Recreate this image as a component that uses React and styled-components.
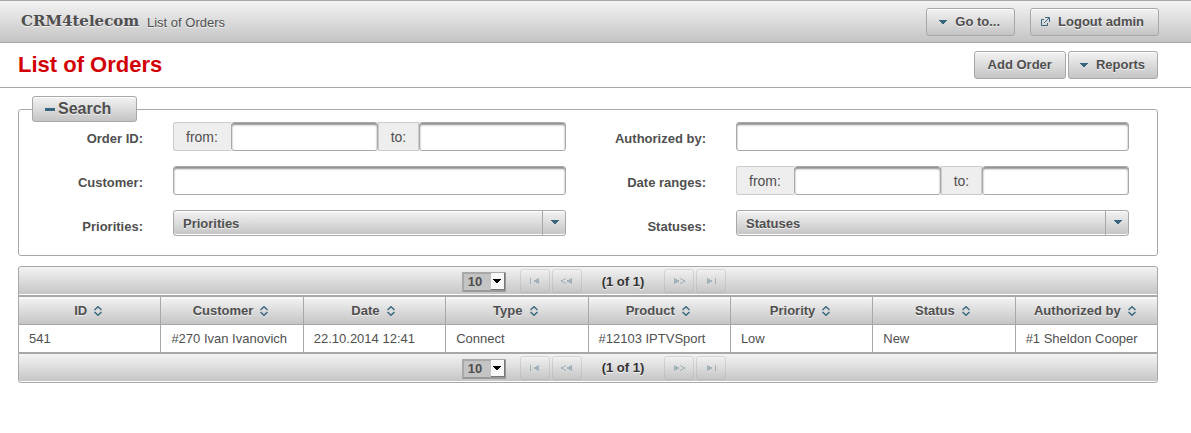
import React from "react";
import styled, { createGlobalStyle, css } from "styled-components";

const line = "#a8a8a8";
const ink = "#4f4f4f";
const accent = "#38667f";

const GlobalStyle = createGlobalStyle`
  *, *::before, *::after { box-sizing: border-box; }
  body {
    margin: 0;
    background: #fff;
    color: ${ink};
    font: 13px/18px "Liberation Sans", Arial, Helvetica, sans-serif;
  }
  button, input, select { font: inherit; color: inherit; }
`;

const raised = css`
  border: 1px solid ${line};
  background: #c4c4c4 linear-gradient(to bottom, rgba(255, 255, 255, 0.8), rgba(255, 255, 255, 0));
  color: ${ink};
  text-shadow: 0 1px 0 rgba(255, 255, 255, 0.7);
`;

const TopBar = styled.header`
  ${raised}
  border-width: 1px 0;
  display: flex;
  align-items: center;
  min-height: 43px;
  padding: 0 32px 0 21px;
`;

const Brand = styled.a`
  width: 126px;
  padding-bottom: 2px;
  color: ${ink};
  font: bold 15px/18px Georgia, "DejaVu Serif", serif;
  text-decoration: none;
`;

const Crumb = styled.span`
  flex: 1;
  padding-top: 2px;
`;

const Actions = styled.div`
  display: flex;
  gap: ${(p) => p.$gap};
`;

const Button = styled.button`
  ${raised}
  display: flex;
  align-items: center;
  gap: 6px;
  height: 28px;
  padding: ${(p) => p.$pad || "0 13px"};
  border-radius: 3px;
  box-shadow: inset 0 1px 0 #fff;
  font-weight: bold;
  cursor: pointer;
`;

const TitleBar = styled.div`
  display: flex;
  align-items: center;
  justify-content: space-between;
  min-height: 45px;
  padding: 0 33px 0 18px;
  border-bottom: 1px solid ${line};
`;

const Title = styled.h1`
  margin: 0;
  color: #d20005;
  font-size: 22px;
  line-height: 28px;
`;

const Main = styled.main`
  padding: 8px 33px 32px 18px;
`;

const SearchBox = styled.fieldset`
  min-width: 0;
  margin: 0;
  padding: 0 28px 19px 0;
  border: 1px solid ${line};
  border-radius: 3px;
`;

const Legend = styled.legend`
  margin-left: 13px;
  padding: 0;
`;

const LegendToggle = styled.button`
  ${raised}
  display: flex;
  align-items: center;
  gap: 3px;
  width: 105px;
  height: 26px;
  padding: 0 12px;
  border-radius: 3px;
  box-shadow: inset 0 1px 0 #fff;
  font-size: 16px;
  font-weight: bold;
`;

const Fields = styled.div`
  display: grid;
  grid-template-columns: 1fr 1fr;
  gap: 15px 16px;
`;

const FieldRow = styled.div`
  display: grid;
  grid-template-columns: 124px minmax(0, 1fr);
  column-gap: 30px;
  align-items: start;
`;

const Label = styled.label`
  padding-top: 8px;
  font-weight: bold;
  text-align: right;
`;

const TextBox = styled.input`
  display: block;
  flex: 1;
  width: 100%;
  min-width: 0;
  height: 29px;
  padding: 4px;
  border: 1px solid ${line};
  border-radius: 3px;
  background: #fff;
  box-shadow: inset 0 2px 2px #8f8f8f;
`;

const Range = styled.div`
  display: flex;
`;

const AddOn = styled.label`
  height: 29px;
  padding: ${(p) => (p.$first ? "4px 13px 4px 12px" : "4px 12px")};
  border: 1px solid #ccc;
  border-right-width: ${(p) => (p.$first ? "0" : "1px")};
  border-radius: ${(p) => (p.$first ? "3px 0 0 3px" : "0")};
  background: #eee;
  font-size: 14px;
  line-height: 20px;
`;

const PickerWrap = styled.div`
  display: grid;
  grid-template-columns: 1fr 24px;
`;

const PickerSelect = styled.select`
  ${raised}
  grid-area: 1 / 1 / 2 / 3;
  appearance: none;
  width: 100%;
  height: 26px;
  padding: 2px 9px 0;
  border-radius: 3px;
  box-shadow: inset 0 1px 0 #fff, inset 0 -1px 0 #fff;
  font-weight: bold;
`;

const PickerArrow = styled.span`
  grid-area: 1 / 2;
  display: flex;
  align-items: center;
  justify-content: center;
  padding-bottom: 2px;
  border-left: 1px solid ${line};
  pointer-events: none;
`;

const Listing = styled.section`
  margin-top: 10px;
`;

const Pager = styled.nav`
  ${raised}
  display: flex;
  align-items: center;
  justify-content: center;
  gap: 2px;
  height: 30px;
  padding-left: 12px;
  border-radius: ${(p) => (p.$bottom ? "0 0 3px 3px" : "3px 3px 0 0")};
  box-shadow: inset 0 -1px 0 #fff;
`;

const SizeWrap = styled.div`
  display: grid;
  grid-template-columns: 1fr 15px;
  width: 44px;
  margin: 2px 12px 0 0;
`;

const SizeSelect = styled.select`
  grid-area: 1 / 1 / 2 / 3;
  appearance: none;
  height: 20px;
  padding: 0 4px;
  border: 2px solid;
  border-color: ${line} #999 #999 ${line};
  border-radius: 1px;
  background: #c4c4c4;
  font-weight: bold;
  line-height: 14px;
`;

const SizeArrow = styled.span`
  grid-area: 1 / 2;
  display: flex;
  align-items: center;
  justify-content: center;
  margin: 1px 1px 2px 0;
  border: solid #777;
  border-width: 0 1px 1px 0;
  background: #f8f8f8;
  pointer-events: none;
`;

const PageButton = styled.button`
  ${raised}
  display: flex;
  align-items: center;
  justify-content: center;
  width: 30px;
  height: 24px;
  padding: 0;
  border-radius: 3px;
  box-shadow: inset 0 1px 0 #fff;
  opacity: 0.35;
`;

const PageInfo = styled.span`
  margin: ${(p) => (p.$bottom ? "0 18px" : "2px 18px 0")};
  color: #333;
  font-weight: bold;
`;

const Table = styled.table`
  width: 100%;
  table-layout: fixed;
  border-collapse: collapse;
`;

const HeadCell = styled.th`
  ${raised}
  height: 28px;
  padding: 0 13px 0 10px;
  box-shadow: inset 0 2px 0 #f8f8f8;
`;

const SortLabel = styled.span`
  display: flex;
  align-items: center;
  justify-content: center;
  gap: 7px;
  white-space: nowrap;
`;

const Cell = styled.td`
  height: 28px;
  padding: 0 10px;
  border: 1px solid ${line};
`;

const Caret = ({ w = 12, fill = accent }) => (
  <svg width={w} height="6" viewBox={`${(8 - w) / 2} 0 ${w} 6`} shapeRendering="crispEdges" aria-hidden="true">
    <path d="M0 1h8v1h-1v1h-1v1h-1v1h-2v-1h-1v-1h-1v-1h-1z" fill={fill} />
  </svg>
);

const External = () => (
  <svg width="12" height="12" viewBox="0 0 12 12" fill="none" stroke={accent} aria-hidden="true">
    <path d="M4 3.500H1.500V9.500H7.500V7" />
    <path d="M5 1.500H9.500V6M9 2L4 7" />
  </svg>
);

const Minus = () => (
  <svg width="10" height="3" viewBox="0 0 10 3" aria-hidden="true">
    <path d="M0 0h10v3H0z" fill={accent} />
  </svg>
);

const SortIcon = () => (
  <svg width="8" height="10" viewBox="0 0 8 10" fill="none" stroke={accent} strokeWidth="1.400" aria-hidden="true">
    <path d="M0.500 4L4 0.700L7.500 4M0.500 6L4 9.300L7.500 6" />
  </svg>
);

const pageShapes = {
  first: "M0 0h1v6h-1zM9 0v6h-1v-1h-2v-1h-2v-2h2v-1h2v-1z",
  prev: "M11 0v6h-1v-1h-2v-1h-2v-2h2v-1h2v-1zM4 0h1v1h-1v1h-2v2h2v1h1v1h-1v-1h-2v-1h-2v-2h2v-1h2z",
  next: "M0 0v6h1v-1h2v-1h2v-2h-2v-1h-2v-1zM7 0h-1v1h1v1h2v2h-2v1h-1v1h1v-1h2v-1h2v-2h-2v-1h-2z",
  last: "M8 0h1v6h-1zM0 0v6h1v-1h2v-1h2v-2h-2v-1h-2v-1z",
};

const PageIcon = ({ kind }) => {
  const w = kind === "first" || kind === "last" ? 9 : 11;
  return (
    <svg width={w} height="6" viewBox={`0 0 ${w} 6`} shapeRendering="crispEdges" aria-hidden="true">
      <path d={pageShapes[kind]} fill={accent} />
    </svg>
  );
};

const Picker = ({ id, label }) => (
  <FieldRow>
    <Label htmlFor={id}>{label}:</Label>
    <PickerWrap>
      <PickerSelect id={id}>
        <option>{label}</option>
      </PickerSelect>
      <PickerArrow>
        <Caret w={8} />
      </PickerArrow>
    </PickerWrap>
  </FieldRow>
);

const TextField = ({ id, label }) => (
  <FieldRow>
    <Label htmlFor={id}>{label}:</Label>
    <TextBox id={id} type="text" />
  </FieldRow>
);

const RangeField = ({ id, label }) => (
  <FieldRow>
    <Label as="span" id={`${id}-label`}>{label}:</Label>
    <Range role="group" aria-labelledby={`${id}-label`}>
      <AddOn $first htmlFor={`${id}-from`}>from:</AddOn>
      <TextBox id={`${id}-from`} type="text" />
      <AddOn htmlFor={`${id}-to`}>to:</AddOn>
      <TextBox id={`${id}-to`} type="text" />
    </Range>
  </FieldRow>
);

const Paginator = ({ bottom }) => (
  <Pager $bottom={bottom} aria-label={bottom ? "Pages, bottom" : "Pages, top"}>
    <SizeWrap>
      <SizeSelect aria-label="Rows per page">
        <option>10</option>
      </SizeSelect>
      <SizeArrow>
        <Caret w={8} fill="#000" />
      </SizeArrow>
    </SizeWrap>
    <PageButton disabled aria-label="First page"><PageIcon kind="first" /></PageButton>
    <PageButton disabled aria-label="Previous page"><PageIcon kind="prev" /></PageButton>
    <PageInfo $bottom={bottom}>(1 of 1)</PageInfo>
    <PageButton disabled aria-label="Next page"><PageIcon kind="next" /></PageButton>
    <PageButton disabled aria-label="Last page"><PageIcon kind="last" /></PageButton>
  </Pager>
);

const columns = ["ID", "Customer", "Date", "Type", "Product", "Priority", "Status", "Authorized by"];
const orders = [
  ["541", "#270 Ivan Ivanovich", "22.10.2014 12:41", "Connect", "#12103 IPTVSport", "Low", "New", "#1 Sheldon Cooper"],
];

export default function App() {
  return (
    <>
      <GlobalStyle />
      <TopBar>
        <Brand href="#">CRM4telecom</Brand>
        <Crumb>List of Orders</Crumb>
        <Actions $gap="15px">
          <Button $pad="0 14px 0 10px"><Caret />Go to...</Button>
          <Button $pad="0 14px 0 9px"><External />Logout admin</Button>
        </Actions>
      </TopBar>
      <TitleBar>
        <Title>List of Orders</Title>
        <Actions $gap="2px">
          <Button>Add Order</Button>
          <Button $pad="0 12px 0 9px"><Caret />Reports</Button>
        </Actions>
      </TitleBar>
      <Main>
        <SearchBox>
          <Legend>
            <LegendToggle type="button" aria-expanded="true"><Minus />Search</LegendToggle>
          </Legend>
          <Fields>
            <RangeField id="order" label="Order ID" />
            <TextField id="authorized" label="Authorized by" />
            <TextField id="customer" label="Customer" />
            <RangeField id="date" label="Date ranges" />
            <Picker id="priorities" label="Priorities" />
            <Picker id="statuses" label="Statuses" />
          </Fields>
        </SearchBox>
        <Listing>
          <Paginator />
          <Table>
            <thead>
              <tr>
                {columns.map((name) => (
                  <HeadCell key={name} scope="col">
                    <SortLabel>{name}<SortIcon /></SortLabel>
                  </HeadCell>
                ))}
              </tr>
            </thead>
            <tbody>
              {orders.map((row) => (
                <tr key={row[0]}>
                  {row.map((value, i) => <Cell key={columns[i]}>{value}</Cell>)}
                </tr>
              ))}
            </tbody>
          </Table>
          <Paginator bottom />
        </Listing>
      </Main>
    </>
  );
}
